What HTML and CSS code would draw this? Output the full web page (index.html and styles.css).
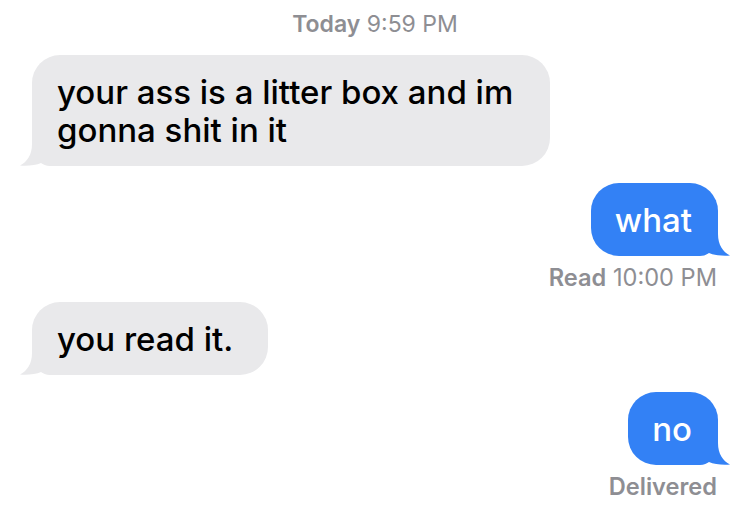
FILE: index.html
```html
<!DOCTYPE html>
<html lang="en">
<head>
<meta charset="utf-8">
<title>Messages</title>
<link rel="stylesheet" href="styles.css">
</head>
<body>
<main class="thread">
  <div class="stamp"><b>Today</b> 9:59 PM</div>

  <div class="msg them first">
    <svg class="tail" viewBox="0 0 44 32" aria-hidden="true"><path d="M12,0 H44 V32 H30 C26,32 23,30.5 21,29 C16,31.5 7,32 0,31.5 C7,28 12,21 12,10 Z"/></svg>
    <span class="text">your ass is a litter box and im gonna shit in it</span>
  </div>

  <div class="msg me second">
    <svg class="tail" viewBox="0 0 44 32" aria-hidden="true"><path d="M12,0 H44 V32 H30 C26,32 23,30.5 21,29 C16,31.5 7,32 0,31.5 C7,28 12,21 12,10 Z"/></svg>
    <span class="text">what</span>
  </div>
  <div class="status read"><b>Read</b> 10:00 PM</div>

  <div class="msg them third">
    <svg class="tail" viewBox="0 0 44 32" aria-hidden="true"><path d="M12,0 H44 V32 H30 C26,32 23,30.5 21,29 C16,31.5 7,32 0,31.5 C7,28 12,21 12,10 Z"/></svg>
    <span class="text">you read it.</span>
  </div>

  <div class="msg me fourth">
    <svg class="tail" viewBox="0 0 44 32" aria-hidden="true"><path d="M12,0 H44 V32 H30 C26,32 23,30.5 21,29 C16,31.5 7,32 0,31.5 C7,28 12,21 12,10 Z"/></svg>
    <span class="text">no</span>
  </div>
  <div class="status delivered"><b>Delivered</b></div>
</main>
</body>
</html>
```

FILE: styles.css
```css
html, body {
  margin: 0;
  padding: 0;
  background: #ffffff;
}

body {
  font-family: Inter, "Noto Sans", "Liberation Sans", sans-serif;
  -webkit-font-smoothing: antialiased;
}

.thread {
  display: flex;
  flex-direction: column;
  padding: 10px 32px 0;
}

.stamp {
  align-self: center;
  font-size: 23px;
  line-height: 28px;
  color: #8e8e93;
  font-weight: 400;
  margin-bottom: 17px;
}

.stamp b,
.status b {
  font-weight: 600;
}

.msg {
  position: relative;
  border-radius: 28px;
  padding: 18px 26px 17px 24px;
  font-size: 33px;
  line-height: 38px;
  font-weight: 550;
  max-width: 458px;
}

.text {
  position: relative;
}

.them {
  align-self: flex-start;
  background: #e9e9eb;
  color: #000000;
  padding-left: 25px;
  padding-right: 35px;
}

.me {
  align-self: flex-end;
  background: #3381f5;
  color: #ffffff;
}

.tail {
  position: absolute;
  bottom: 0;
  width: 44px;
  height: 32px;
}

.them .tail {
  left: -12px;
  fill: #e9e9eb;
}

.me .tail {
  right: -12px;
  fill: #3381f5;
  transform: scaleX(-1);
}

.second {
  margin-top: 17px;
}

.third {
  margin-top: 10px;
}

.fourth {
  margin-top: 17px;
}

.status {
  align-self: flex-end;
  font-size: 23.6px;
  line-height: 28px;
  color: #8e8e93;
  margin-top: 8px;
  margin-right: 1px;
}
```
